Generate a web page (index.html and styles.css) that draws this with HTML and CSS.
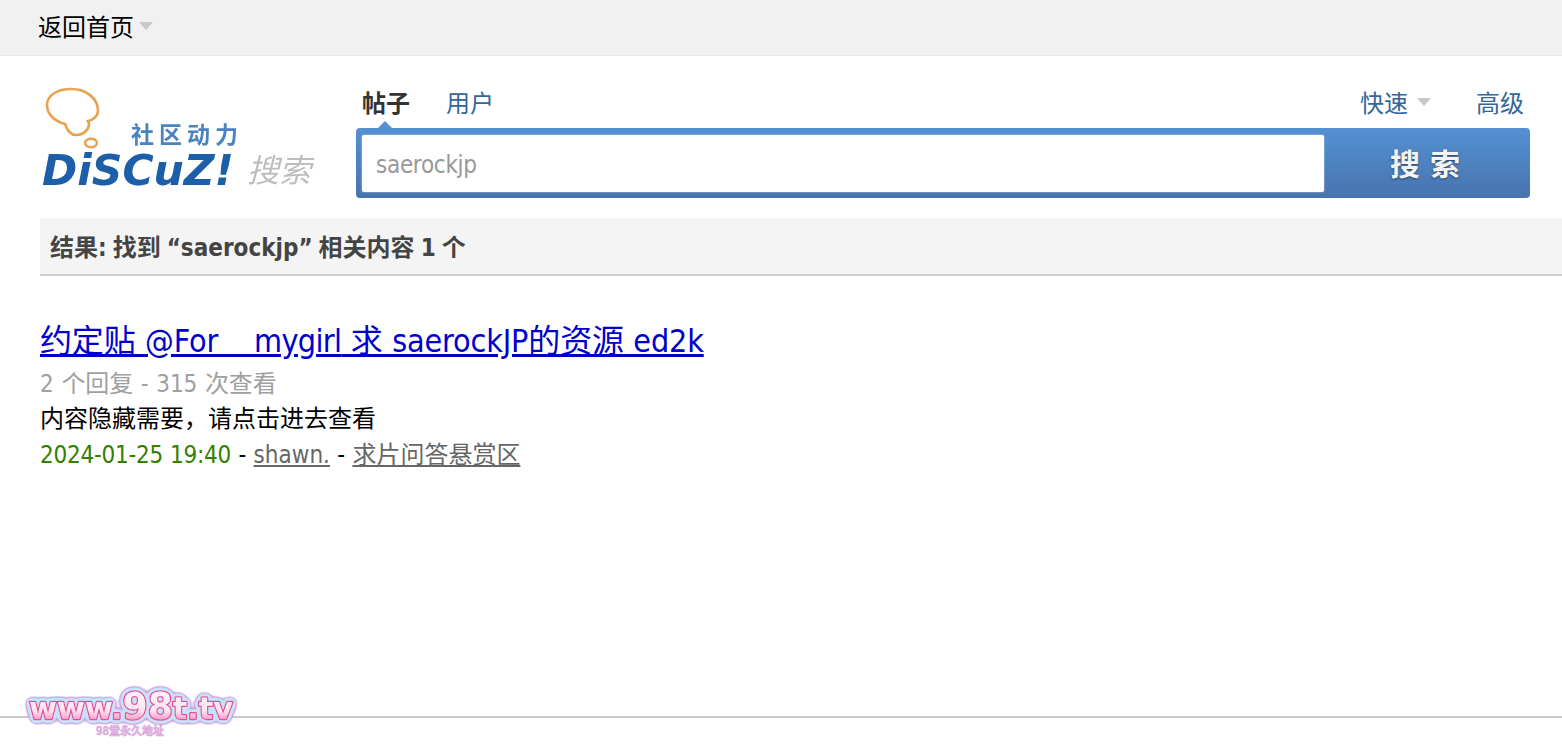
FILE: index.html
```html
<!DOCTYPE html>
<html lang="zh-CN">
<head>
  <meta charset="UTF-8" />
  <title>搜索结果</title>
  <link rel="stylesheet" href="styles.css">
</head>
<body>
  <div class="topbar">
    <a class="home" href="#">返回首页</a>
    <span class="caret"></span>
  </div>

  <div class="header">
    <svg class="logo" width="280" height="105" viewBox="0 0 280 105">
      <defs>
        <filter id="soft"><feGaussianBlur stdDeviation="0.5"/></filter>
      </defs>
      <g filter="url(#soft)">
        <path d="M31 4C46 4 58 13 58 26C58 31 53 35 48 36C51 41 46 50 36 50C30 50 27 45 25 39C14 36 7 29 7 20C7 10 18 4 31 4Z" fill="none" stroke="#e9a24e" stroke-width="2.6"/>
        <ellipse cx="51" cy="58" rx="6" ry="4.2" fill="none" stroke="#e9a24e" stroke-width="2.4"/>
        <text class="logo-slogan" x="91" y="58">社区动力</text>
        <text class="logo-name" x="2" y="100" textLength="192" lengthAdjust="spacingAndGlyphs">DiSCuZ!</text>
        <text class="logo-search" x="207" y="97">搜索</text>
      </g>
    </svg>

    <div class="search">
      <div class="search-links">
        <div class="tabs">
          <a class="tab tab-active" href="#">帖子</a>
          <a class="tab" href="#">用户</a>
        </div>
        <div class="options">
          <a class="tab" href="#">快速</a>
          <span class="caret"></span>
          <a class="tab advanced" href="#">高级</a>
        </div>
      </div>
      <div class="search-box">
        <span class="pointer"></span>
        <div class="search-input">saerockjp</div>
        <div class="search-btn"><span>搜 索</span></div>
      </div>
    </div>
  </div>

  <div class="result-title">结果: 找到 “saerockjp” 相关内容 1 个</div>

  <div class="result">
    <a class="result-link" href="#">约定贴 @For &nbsp;&nbsp;&nbsp;<span class="tight">mygirl</span> 求 saerockJP的资源 ed2k</a>
    <p class="result-meta">2 个回复 - 315 次查看</p>
    <p class="result-text">内容隐藏需要，请点击进去查看</p>
    <p class="result-info"><span class="date">2024-01-25 19:40</span> - <a href="#">shawn.</a> - <a href="#">求片问答悬赏区</a></p>
  </div>

  <div class="footer-line"></div>

  <svg class="badge" width="240" height="62" viewBox="0 0 240 62">
    <defs>
      <linearGradient id="pinkfill" x1="0" y1="0" x2="0" y2="1">
        <stop offset="0.2" stop-color="#fff2f8"/>
        <stop offset="0.6" stop-color="#ffe4f0"/>
        <stop offset="0.85" stop-color="#f98cc0"/>
      </linearGradient>
      <filter id="halo" x="-10%" y="-40%" width="120%" height="180%">
        <feGaussianBlur in="SourceAlpha" stdDeviation="2.2"/>
        <feComponentTransfer result="d2"><feFuncA type="linear" slope="12" intercept="-0.6"/></feComponentTransfer>
        <feFlood flood-color="#c8e2fa"/>
        <feComposite in2="d2" operator="in" result="blue"/>
        <feGaussianBlur in="SourceAlpha" stdDeviation="3"/>
        <feComponentTransfer result="d3"><feFuncA type="linear" slope="12" intercept="-0.5"/></feComponentTransfer>
        <feFlood flood-color="#cfa2e0"/>
        <feComposite in2="d3" operator="in" result="lilac"/>
        <feGaussianBlur in="SourceGraphic" stdDeviation="0.2" result="art"/>
        <feMerge>
          <feMergeNode in="lilac"/>
          <feMergeNode in="blue"/>
          <feMergeNode in="art"/>
        </feMerge>
      </filter>
    </defs>
    <text class="badge-url" x="13" y="35" textLength="204" lengthAdjust="spacingAndGlyphs" fill="url(#pinkfill)" filter="url(#halo)">www.<tspan class="badge-big">98</tspan>t.tv</text>
    <text class="badge-sub" x="114" y="51">98堂永久地址</text>
  </svg>
</body>
</html>
```

FILE: styles.css
```css
* {
  box-sizing: border-box;
}

body {
  margin: 0;
  background: #fff;
  color: #000;
  font-family: "DejaVu Sans Condensed", "DejaVu Sans", "Noto Sans CJK SC", sans-serif;
  font-size: 24px;
  height: 746px;
  overflow: hidden;
  position: relative;
}

a {
  color: inherit;
}

p {
  margin: 0;
}

.caret {
  display: inline-block;
  width: 0;
  height: 0;
  border-top: 8px solid #c8c8c8;
  border-left: 7.5px solid transparent;
  border-right: 7.5px solid transparent;
}

.topbar {
  display: flex;
  align-items: center;
  gap: 5px;
  height: 56px;
  padding: 0 0 4px 38px;
  background: #f1f1f1;
  border-bottom: 1px solid #e8e8e8;
}

.home {
  text-decoration: none;
  color: #000;
}

.header {
  display: flex;
  padding: 29px 32px 0 40px;
}

.logo {
  display: block;
  flex: none;
  margin-right: 37px;
}

.logo-slogan {
  font-size: 23px;
  letter-spacing: 5px;
  fill: #4a84c0;
  font-family: "Noto Sans CJK SC", sans-serif;
  font-weight: 700;
}

.logo-name {
  font-family: "DejaVu Sans", sans-serif;
  font-size: 43px;
  font-weight: bold;
  font-style: italic;
  fill: #1a5ea8;
}

.logo-search {
  font-family: "Noto Sans CJK SC", sans-serif;
  font-size: 32px;
  font-style: italic;
  fill: #bdbdbd;
}

.search {
  flex: 1;
  min-width: 0;
  margin-left: -1px;
}

.search-links {
  display: flex;
  justify-content: space-between;
  align-items: center;
  height: 43px;
  padding: 0 6px 10px;
}

.tabs {
  display: flex;
  gap: 36px;
}

.options {
  display: flex;
  align-items: center;
  gap: 9px;
}

.tab {
  color: #336699;
  text-decoration: none;
}

.tab-active {
  color: #333;
  font-weight: bold;
}

.advanced {
  margin-left: 36px;
}

.search-box {
  display: flex;
  position: relative;
  height: 70px;
  padding: 7px 0 6px 6px;
  border-radius: 4px;
  background: linear-gradient(#5590d3, #4774ae);
}

.pointer {
  position: absolute;
  left: 22px;
  top: -7px;
  width: 0;
  height: 0;
  border-bottom: 7px solid #5590d3;
  border-left: 7px solid transparent;
  border-right: 7px solid transparent;
}

.search-input {
  flex: 1;
  padding-left: 14px;
  background: #fff;
  border-radius: 2px;
  color: #999;
  line-height: 60px;
  letter-spacing: -0.3px;
  box-shadow: 0 0 2px rgba(255, 255, 255, 0.7);
}

.search-btn {
  width: 206px;
  display: flex;
  align-items: center;
  justify-content: center;
  padding: 0 4px 3px 0;
  color: #f4f4f4;
  font-family: "Noto Sans CJK SC", sans-serif;
  font-size: 30px;
  font-weight: bold;
  word-spacing: 3px;
  text-shadow: 0 1px 2px rgba(0, 0, 0, 0.5);
}

.result-title {
  height: 58px;
  margin: 20px 0 0 40px;
  padding-left: 10px;
  background: #f4f4f4;
  border-bottom: 2px solid #cfcfcf;
  color: #444;
  font-weight: bold;
  line-height: 61px;
  word-spacing: -1.5px;
}

.result {
  margin: 45px 0 0 40px;
}

.result-link {
  display: inline-block;
  color: #0000cc;
  font-size: 32px;
  line-height: 40px;
  letter-spacing: -0.15px;
  word-spacing: 0.5px;
}

.tight {
  margin-left: -2px;
  letter-spacing: -0.65px;
}

.result-meta {
  margin-top: 5px;
  color: #a0a0a0;
  line-height: 36px;
  letter-spacing: -0.1px;
  word-spacing: 1px;
}

.result-text {
  margin-top: -1px;
  line-height: 36px;
}

.result-info {
  line-height: 36px;
  word-spacing: 0.5px;
}

.result-info a {
  color: #666;
}

.date {
  color: #338000;
  letter-spacing: -0.25px;
}

.footer-line {
  position: absolute;
  left: 0;
  right: 0;
  top: 716px;
  height: 2px;
  background: #c8c8c8;
}

.badge {
  position: absolute;
  left: 16px;
  top: 684px;
}

.badge-url {
  font-family: "DejaVu Sans", sans-serif;
  font-size: 31px;
  font-weight: bold;
  stroke: #e0509a;
  stroke-width: 2.6px;
  stroke-linejoin: round;
  paint-order: stroke;
}

.badge-big {
  font-size: 37px;
}

.badge-sub {
  font-family: "Noto Sans CJK SC", sans-serif;
  font-size: 11px;
  font-weight: bold;
  fill: #f7b3d6;
  stroke: #c9a0e0;
  stroke-width: 0.5px;
  text-anchor: middle;
}
```
